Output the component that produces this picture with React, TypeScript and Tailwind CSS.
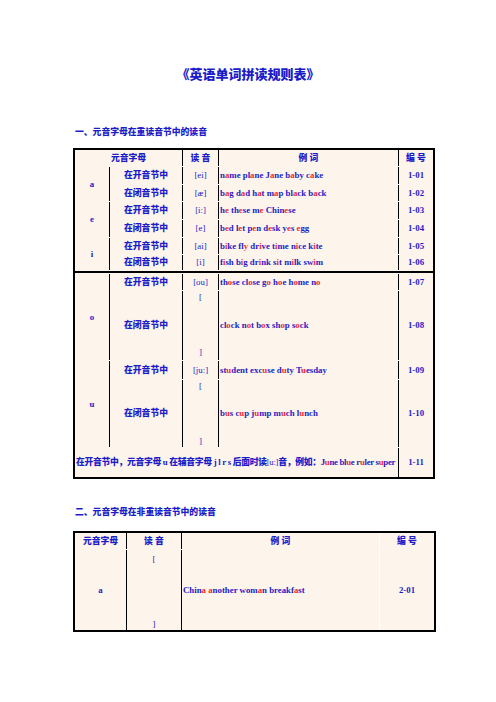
const BLUE = "text-[#1c1cc8]";

function Word({ text }: { text: string }) {
  const parts = text.split(/(\{[^}]*\})/);
  return (
    <span className="whitespace-pre">
      {parts.map((p, i) =>
        p.startsWith("{") ? (
          <span key={i} className="text-[#f42a2a]">
            {p.slice(1, -1)}
          </span>
        ) : (
          <span key={i}>{p}</span>
        )
      )}
    </span>
  );
}

const cell = "flex items-center justify-center border-r-[1.5px] border-black";
const last = "flex items-center justify-center";

function Bracket({ top, bottom }: { top: string; bottom: string }) {
  return (
    <div className={`flex flex-col items-center justify-between border-r-[1.5px] border-black font-normal leading-[11px] ${top} ${bottom}`}>
      <span>[</span>
      <span>]</span>
    </div>
  );
}

export default function App() {
  return (
    <div
      className={`w-[496px] h-[702px] overflow-hidden bg-white font-['Liberation_Serif','Noto_Sans_CJK_SC',serif] ${BLUE}`}
    >
      <div className="mt-[67px] text-center text-[13px] leading-[16px] font-black">
        《英语单词拼读规则表》
      </div>

      <div className="mt-[43px] pl-[75px] text-[8.8px] leading-[12px] font-black">
        一、元音字母在重读音节中的读音
      </div>

      <div className="mt-[10px] ml-[73px] w-[362px] border-2 border-black bg-[#fdf4ec] grid grid-cols-[35px_73px_36px_180px_34px] grid-rows-[16px_17px_16px_17px_17px_16px_15px_2px_16px_69px_18px_67px_29px] gap-y-px text-[8.8px] leading-[11px] font-bold">
        {/* header */}
        <div className={`${cell} col-span-2 font-black`}>元音字母</div>
        <div className={`${cell} font-black`}>读 音</div>
        <div className={`${cell} font-black`}>例 词</div>
        <div className={`${last} font-black`}>编 号</div>

        {/* a */}
        <div className={`${cell} row-span-2`}>a</div>
        <div className={`${cell} font-black`}>在开音节中</div>
        <div className={`${cell} font-normal`}>[ei]</div>
        <div className={`${cell} justify-start pl-px`}><Word text="n{a}me pl{a}ne J{a}ne b{a}by c{a}ke" /></div>
        <div className={last}>1-01</div>
        <div className={`${cell} font-black`}>在闭音节中</div>
        <div className={`${cell} font-normal`}>[æ]</div>
        <div className={`${cell} justify-start pl-px`}><Word text="b{a}g d{a}d h{a}t m{a}p bl{a}ck b{a}ck" /></div>
        <div className={last}>1-02</div>

        {/* e */}
        <div className={`${cell} row-span-2`}>e</div>
        <div className={`${cell} font-black`}>在开音节中</div>
        <div className={`${cell} font-normal`}>[i:]</div>
        <div className={`${cell} justify-start pl-px`}><Word text="h{e} th{e}se m{e} Chin{e}se" /></div>
        <div className={last}>1-03</div>
        <div className={`${cell} font-black`}>在闭音节中</div>
        <div className={`${cell} font-normal`}>[e]</div>
        <div className={`${cell} justify-start pl-px`}><Word text="b{e}d l{e}t p{e}n d{e}sk y{e}s {e}gg" /></div>
        <div className={last}>1-04</div>

        {/* i */}
        <div className={`${cell} row-span-2`}>i</div>
        <div className={`${cell} font-black`}>在开音节中</div>
        <div className={`${cell} font-normal`}>[ai]</div>
        <div className={`${cell} justify-start pl-px`}><Word text="b{i}ke fl{y} dr{i}ve t{i}me n{i}ce k{i}te" /></div>
        <div className={last}>1-05</div>
        <div className={`${cell} font-black`}>在闭音节中</div>
        <div className={`${cell} font-normal`}>[i]</div>
        <div className={`${cell} justify-start pl-px`}><Word text="f{i}sh b{i}g dr{i}nk s{i}t m{i}lk sw{i}m" /></div>
        <div className={last}>1-06</div>

        <div className="col-span-5 bg-black" />

        {/* o */}
        <div className={`${cell} row-span-2`}>o</div>
        <div className={`${cell} font-black`}>在开音节中</div>
        <div className={`${cell} font-normal`}>[ou]</div>
        <div className={`${cell} justify-start pl-px`}><Word text="th{o}se cl{o}se g{o} h{o}e h{o}me n{o}" /></div>
        <div className={last}>1-07</div>
        <div className={`${cell} font-black`}>在闭音节中</div>
        <Bracket top="pt-px" bottom="pb-[2px]" />
        <div className={`${cell} justify-start pl-px`}><Word text="cl{o}ck n{o}t b{o}x sh{o}p s{o}ck" /></div>
        <div className={last}>1-08</div>

        {/* u */}
        <div className={`${cell} row-span-2`}>u</div>
        <div className={`${cell} font-black`}>在开音节中</div>
        <div className={`${cell} font-normal`}>[ju:]</div>
        <div className={`${cell} justify-start pl-px`}><Word text="st{u}dent exc{u}se d{u}ty T{u}esday" /></div>
        <div className={last}>1-09</div>
        <div className={`${cell} font-black`}>在闭音节中</div>
        <Bracket top="pt-px" bottom="pb-0" />
        <div className={`${cell} justify-start pl-px`}><Word text="b{u}s c{u}p j{u}mp m{u}ch l{u}nch" /></div>
        <div className={last}>1-10</div>

        {/* last row */}
        <div className={`${cell} col-span-4 justify-start pl-px`}>
          <span className="whitespace-pre tracking-[-0.3px] font-black">
            在开音节中，元音字母 u 在辅音字母 j l r s 后面时读<span className="font-normal">[u:]</span>音，例如：<span className="font-bold"><Word text="J{u}ne bl{u}e r{u}ler s{u}per" /></span>
          </span>
        </div>
        <div className={last}>1-11</div>
      </div>

      <div className="mt-[27px] pl-[75px] text-[8.8px] leading-[12px] font-black">
        二、元音字母在非重读音节中的读音
      </div>

      <div className="mt-[13px] ml-[73px] w-[363px] border-2 border-black bg-[#fdf4ec] grid grid-cols-[52px_55px_198px_54px] grid-rows-[16px_80px] gap-y-px text-[8.8px] leading-[11px] font-bold">
        <div className={`${cell} font-black`}>元音字母</div>
        <div className={`${cell} font-black`}>读 音</div>
        <div className="flex items-center justify-center border-r border-white font-black">例 词</div>
        <div className={`${last} font-black`}>编 号</div>

        <div className={cell}>a</div>
        <Bracket top="pt-[4px]" bottom="pb-0" />
        <div className="flex items-center justify-start pl-px border-r border-white">
          <Word text="Chin{a} {a}nother wom{a}n breakf{a}st" />
        </div>
        <div className={last}>2-01</div>
      </div>
    </div>
  );
}
